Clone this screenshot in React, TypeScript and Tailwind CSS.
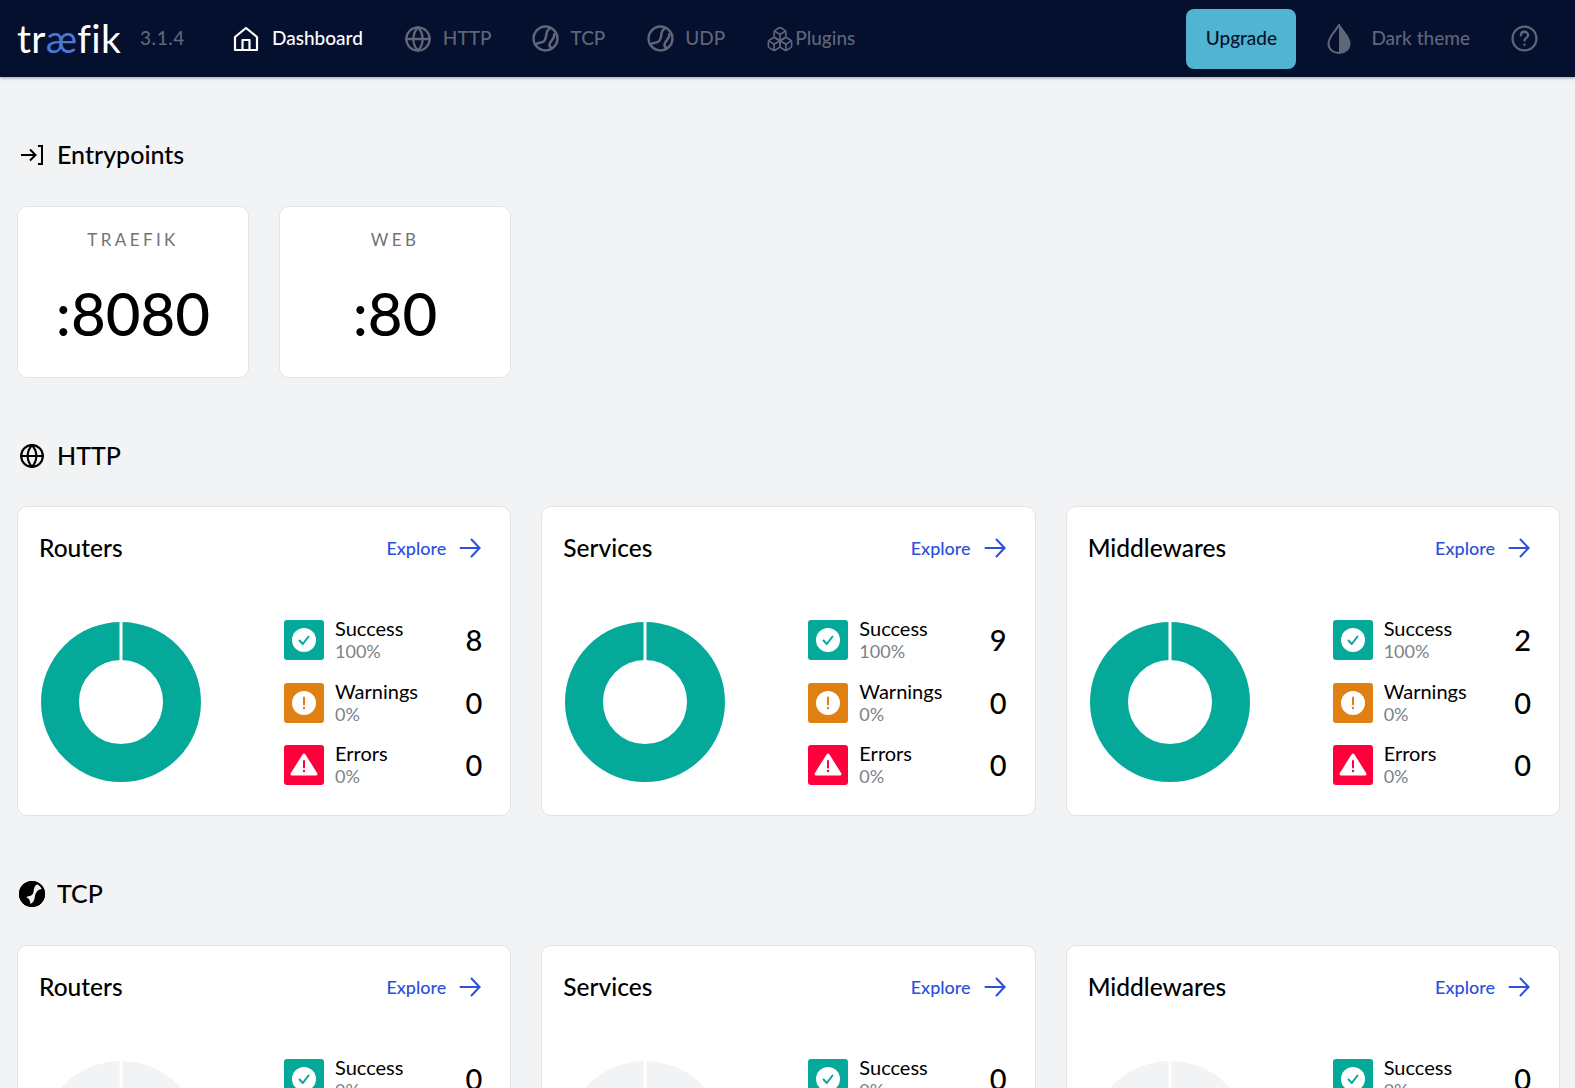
import { Boxes, Globe } from "lucide-react";

const font = "font-['Lato','Noto_Sans',sans-serif]";

const HomeIcon = () => (
  <svg width="26" height="26" viewBox="0 0 26 26" fill="none" stroke="currentColor" strokeWidth="2.2" strokeLinejoin="round">
    <path d="M2 11 L13 2 L24 11 V24 H2 Z" />
    <path d="M9.5 24 V14 H16.5 V24" />
  </svg>
);

const TcpIcon = ({ size = 27 }: { size?: number }) => (
  <svg width={size} height={size} viewBox="0 0 26 26" fill="none" stroke="currentColor" strokeWidth="2.4">
    <circle cx="13" cy="13" r="11.5" />
    <path d="M18 3 C12 5 15 11 12 15 C10 18 5 16 3.5 19" />
    <path d="M21 8 C23 12 18 15 17 18 C16.5 20 17.5 21.5 19 22" />
  </svg>
);

const TcpSolid = () => (
  <svg width="26" height="26" viewBox="0 0 26 26">
    <circle cx="13" cy="13" r="13" fill="black" />
    <path d="M20 3 C16 3 15 7 14.5 11 C14 15 10 15 7 16 C9 17 11 18 11.5 23 C17 20 15 15 17 12 C18 9.5 21 8 23 8 C22.5 6 21.5 4 20 3 Z" fill="#f2f3f5" />
    <circle cx="13" cy="13" r="12" fill="none" stroke="black" strokeWidth="2" />
  </svg>
);

const DropIcon = () => (
  <svg width="24" height="30" viewBox="0 0 24 30">
    <path d="M12 1 C8 8 1.5 13 1.5 19.5 C1.5 25.5 6.5 29 12 29 C17.5 29 22.5 25.5 22.5 19.5 C22.5 13 16 8 12 1 Z" fill="none" stroke="#5e6678" strokeWidth="2" />
    <path d="M12 1 C16 8 22.5 13 22.5 19.5 C22.5 25.5 17.5 29 12 29 Z" fill="#5e6678" />
  </svg>
);

const HelpIcon = () => (
  <svg width="27" height="27" viewBox="0 0 26 26" fill="none" stroke="#5e6678" strokeWidth="2.2" strokeLinecap="round">
    <circle cx="13" cy="13" r="11.5" />
    <path d="M9.5 10 C9.5 7.5 11 6.5 13 6.5 C15 6.5 16.5 8 16.5 9.8 C16.5 12.3 13 12.5 13 15" />
    <path d="M13 19 V19.2" />
  </svg>
);

const EntryIcon = () => (
  <svg width="26" height="26" viewBox="0 0 26 26" fill="none" stroke="black" strokeWidth="2">
    <path d="M2 13 H16" />
    <path d="M11 7.5 L16.5 13 L11 18.5" />
    <path d="M19 4 H23 V22 H19" />
  </svg>
);

const ArrowIcon = () => (
  <svg width="24" height="24" viewBox="0 0 24 24" fill="none" stroke="#2b50db" strokeWidth="2" strokeLinecap="round" strokeLinejoin="round">
    <path d="M2.5 12 H21.5" />
    <path d="M13.5 3.5 L21.5 12 L13.5 20.5" />
  </svg>
);

const NavItem = ({ icon, label, className }: { icon: React.ReactNode; label: string; className: string }) => (
  <div className={`flex items-center ${className}`}>
    {icon}
    <span>{label}</span>
  </div>
);

const SectionTitle = ({ icon, label }: { icon: React.ReactNode; label: string }) => (
  <div className="flex h-[34px] items-center">
    <div className="flex w-[40px] shrink-0 justify-start pl-[2px]">{icon}</div>
    <div className="text-[25px] font-medium text-black">{label}</div>
  </div>
);

const EntryCard = ({ name, port }: { name: string; port: string }) => (
  <div className="flex h-[172px] w-[232px] flex-col items-center rounded-[10px] border border-[#e1e3e6] bg-white pt-[21px]">
    <div className="text-[17px] leading-[24px] tracking-[0.2em] text-[#6f7378]">{name}</div>
    <div className="mt-[22px] text-[60px] leading-[78px] font-medium text-black">{port}</div>
  </div>
);

const Donut = ({ color }: { color: string }) => (
  <svg width="160" height="160" viewBox="0 0 160 160" className="shrink-0">
    <circle cx="80" cy="80" r="61" fill="none" stroke={color} strokeWidth="38" />
    <rect x="78.5" y="0" width="3" height="40" fill="white" />
  </svg>
);

const StatIcon = ({ kind }: { kind: "success" | "warning" | "error" }) => {
  if (kind === "success") {
    return (
      <div className="flex h-[40px] w-[40px] shrink-0 items-center justify-center rounded-[3px] bg-[#04a999]">
        <svg width="24" height="24" viewBox="0 0 24 24">
          <circle cx="12" cy="12" r="12" fill="white" />
          <path d="M7.5 12.5 L10.8 16 L16.5 8.5" fill="none" stroke="#04a999" strokeWidth="2" strokeLinecap="round" strokeLinejoin="round" />
        </svg>
      </div>
    );
  }
  if (kind === "warning") {
    return (
      <div className="flex h-[40px] w-[40px] shrink-0 items-center justify-center rounded-[3px] bg-[#e08012]">
        <svg width="24" height="24" viewBox="0 0 24 24">
          <circle cx="12" cy="12" r="12" fill="white" />
          <path d="M12 6.5 V13.5" stroke="#e08012" strokeWidth="2" strokeLinecap="round" />
          <circle cx="12" cy="17" r="1.2" fill="#e08012" />
        </svg>
      </div>
    );
  }
  return (
    <div className="flex h-[40px] w-[40px] shrink-0 items-center justify-center rounded-[3px] bg-[#ff003d]">
      <svg width="28" height="24" viewBox="0 0 28 24">
        <path d="M14 2 L26 21 H2 Z" fill="white" stroke="white" strokeWidth="3" strokeLinejoin="round" />
        <path d="M14 8 V14.5" stroke="#ff003d" strokeWidth="2" strokeLinecap="round" />
        <circle cx="14" cy="18" r="1.2" fill="#ff003d" />
      </svg>
    </div>
  );
};

const StatRow = ({ kind, label, pct, value }: { kind: "success" | "warning" | "error"; label: string; pct: string; value: number }) => (
  <div className="flex h-[40px] items-center">
    <StatIcon kind={kind} />
    <div className="ml-[11px] flex-1">
      <div className="text-[20px] leading-[23px] text-black">{label}</div>
      <div className="text-[18px] leading-[23px] text-[#7c8288]">{pct}</div>
    </div>
    <div className="text-[29px] leading-[40px] font-medium text-black">{value}</div>
  </div>
);

const StatCard = ({ title, values, pcts, donut }: { title: string; values: number[]; pcts: string[]; donut: string }) => (
  <div className="h-[310px] rounded-[10px] border border-[#e1e3e6] bg-white pt-[21px] pr-[28px] pl-[21px]">
    <div className="flex h-[40px] items-center justify-between">
      <div className="text-[24.5px] font-medium text-black">{title}</div>
      <div className="flex items-center gap-[12px] text-[18px] font-medium text-[#2b50db]">
        Explore
        <ArrowIcon />
      </div>
    </div>
    <div className="mt-[54px] flex">
      <div className="ml-[2px]">
        <Donut color={donut} />
      </div>
      <div className="mt-[-2px] ml-[83px] flex flex-1 flex-col gap-[22.5px]">
        <StatRow kind="success" label="Success" pct={pcts[0]} value={values[0]} />
        <StatRow kind="warning" label="Warnings" pct={pcts[1]} value={values[1]} />
        <StatRow kind="error" label="Errors" pct={pcts[2]} value={values[2]} />
      </div>
    </div>
  </div>
);

export default function App() {
  return (
    <div className={`h-screen overflow-hidden bg-[#f2f3f5] ${font}`}>
      <header className="flex h-[77px] items-center bg-[#050f2e] pr-[37px] pl-[17px] text-[19px] font-medium text-[#5e6678] shadow-[0_1px_3px_rgba(0,0,0,0.35)]">
        <div className="w-[106px] text-[39px] leading-none font-normal tracking-[0.01em] text-white">
          tr<span className="text-[#4a77d8]">æ</span>fik
        </div>
        <div className="ml-[17px] w-[93px] tracking-[0.03em]">3.1.4</div>
        <NavItem icon={<HomeIcon />} label="Dashboard" className="gap-[13px] text-white" />
        <NavItem icon={<Globe size={28} strokeWidth={2} />} label="HTTP" className="ml-[41px] gap-[11px]" />
        <NavItem icon={<TcpIcon />} label="TCP" className="ml-[41px] gap-[11px]" />
        <NavItem icon={<TcpIcon />} label="UDP" className="ml-[42px] gap-[11px]" />
        <NavItem icon={<Boxes size={28} strokeWidth={1.4} />} label="Plugins" className="ml-[41px] gap-[1px]" />
        <div className="ml-auto flex h-[60px] w-[110px] items-center justify-center rounded-[8px] bg-[#51b4d0] text-[#06112f]">
          Upgrade
        </div>
        <div className="ml-[31px] flex items-center gap-[20px]">
          <DropIcon />
          <span>Dark theme</span>
        </div>
        <div className="ml-[41px]">
          <HelpIcon />
        </div>
      </header>

      <main className="pr-[15px] pl-[17px]">
        <div className="pt-[61px]">
          <SectionTitle icon={<EntryIcon />} label="Entrypoints" />
        </div>
        <div className="mt-[34px] flex gap-[30px]">
          <EntryCard name="TRAEFIK" port=":8080" />
          <EntryCard name="WEB" port=":80" />
        </div>

        <div className="mt-[61px]">
          <SectionTitle icon={<Globe size={26} color="black" strokeWidth={2} />} label="HTTP" />
        </div>
        <div className="mt-[33px] grid grid-cols-3 gap-[30px]">
          <StatCard title="Routers" values={[8, 0, 0]} pcts={["100%", "0%", "0%"]} donut="#04a999" />
          <StatCard title="Services" values={[9, 0, 0]} pcts={["100%", "0%", "0%"]} donut="#04a999" />
          <StatCard title="Middlewares" values={[2, 0, 0]} pcts={["100%", "0%", "0%"]} donut="#04a999" />
        </div>

        <div className="mt-[61px]">
          <SectionTitle icon={<TcpSolid />} label="TCP" />
        </div>
        <div className="mt-[34px] grid grid-cols-3 gap-[30px]">
          <StatCard title="Routers" values={[0, 0, 0]} pcts={["0%", "0%", "0%"]} donut="#f2f3f5" />
          <StatCard title="Services" values={[0, 0, 0]} pcts={["0%", "0%", "0%"]} donut="#f2f3f5" />
          <StatCard title="Middlewares" values={[0, 0, 0]} pcts={["0%", "0%", "0%"]} donut="#f2f3f5" />
        </div>
      </main>
    </div>
  );
}
